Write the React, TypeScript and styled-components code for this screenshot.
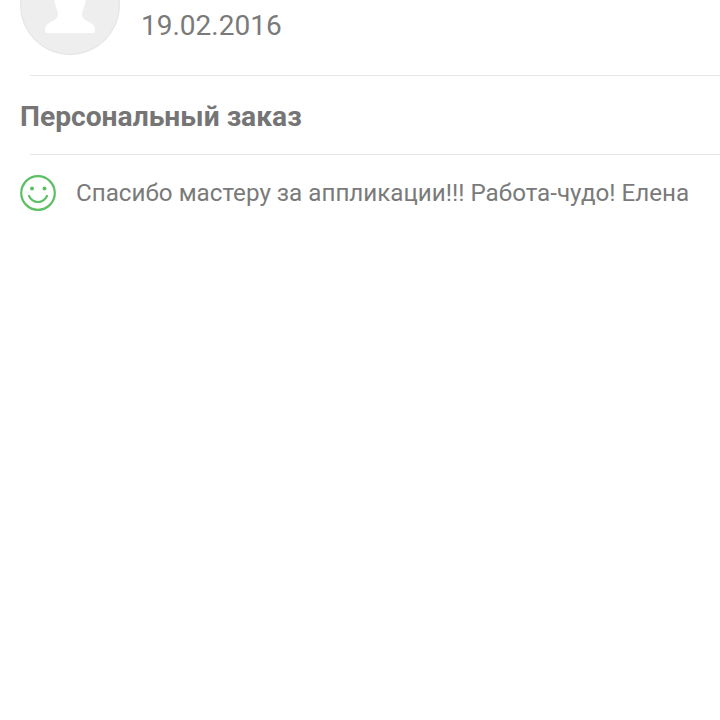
import styled, { createGlobalStyle } from "styled-components";

const GlobalStyle = createGlobalStyle`
    html, body {
        margin: 0;
        padding: 0;
        height: 100%;
        background: #fff;
        overflow: hidden;
    }
    body {
        font-family: Roboto, "Liberation Sans", sans-serif;
        color: #7a7a7a;
    }
`
const Page = styled.div`
    width: 720px;
    height: 720px;
    overflow: hidden;
`
const Header = styled.header`
    display: flex;
    height: 75px;
    padding-left: 20px;
    box-sizing: border-box;
`
const Avatar = styled.div`
    flex: none;
    width: 100px;
    height: 100px;
    margin-top: -45.5px;
    box-sizing: border-box;
    border-radius: 50%;
    background: #eeeeee;
    border: 1px solid #e3e3e3;
    & svg { display: block; }
`
const DateText = styled.div`
    margin: 9px 0 0 21px;
    font-size: 28px;
    line-height: 33px;
    white-space: nowrap;
`
const Divider = styled.div`
    height: 1px;
    margin-left: 30px;
    background: #e6e6e6;
`
const Title = styled.h2`
    margin: 0;
    height: 78px;
    padding-left: 20px;
    font-size: 28.2px;
    font-weight: 700;
    line-height: 82px;
    color: #757575;
    white-space: nowrap;
`
const CommentRow = styled.div`
    display: flex;
    align-items: center;
    gap: 20px;
    padding: 20px 0 0 20px;
    font-size: 24.2px;
    line-height: 36px;
    white-space: nowrap;
`

function Silhouette() {
    return (
        <svg width="98" height="98" viewBox="0 0 98 98">
            <path fill="#fff" d="M24 75c0-5 2-7 6-9 4-2 7-4 7-8 0-3-2-6-3-10-2-8 0-20 15-20s17 12 15 20c-1 4-3 7-3 10 0 4 3 6 7 8 4 2 6 4 6 9 0 1-1 2-2 2H26c-1 0-2-1-2-2z" />
        </svg>
    )
}

function Smile() {
    return (
        <svg width="36" height="36" viewBox="0 0 36 36" fill="none" stroke="#5cbf63">
            <circle cx="18" cy="18" r="16.8" strokeWidth="2.2" />
            <circle cx="12" cy="13.5" r="2" fill="#5cbf63" stroke="none" />
            <circle cx="24.5" cy="13.5" r="2" fill="#5cbf63" stroke="none" />
            <path d="M9 21c2 4 5.2 6 9 6s7-2 9-6" strokeWidth="2.2" strokeLinecap="round" />
        </svg>
    )
}

export default function App() {
    return (
        <Page>
            <GlobalStyle />
            <Header>
                <Avatar><Silhouette /></Avatar>
                <DateText>19.02.2016</DateText>
            </Header>
            <Divider />
            <Title>Персональный заказ</Title>
            <Divider />
            <CommentRow>
                <Smile />
                <span>Спасибо мастеру за аппликации!!! Работа-чудо! Елена</span>
            </CommentRow>
        </Page>
    )
}
